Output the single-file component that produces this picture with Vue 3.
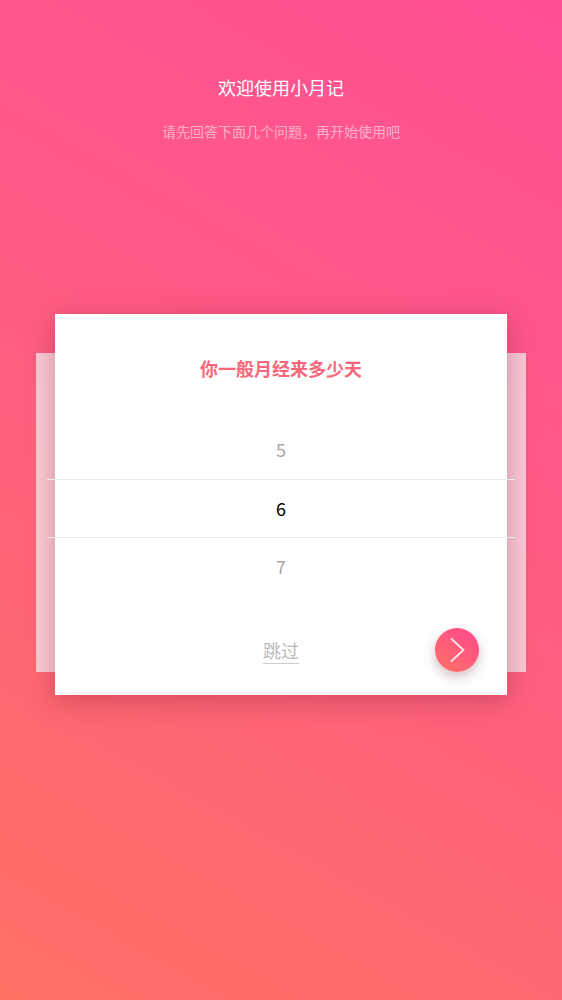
<script setup>
const items = [
  { value: 5, active: false },
  { value: 6, active: true },
  { value: 7, active: false },
]
</script>

<template>
  <main class="page">
    <header class="intro">
      <h1 class="welcome">欢迎使用小月记</h1>
      <p class="hint">请先回答下面几个问题，再开始使用吧</p>
    </header>

    <section class="stage">
      <div class="back-card"></div>
      <div class="card">
        <h2 class="question">你一般月经来多少天</h2>
        <div class="picker">
          <div v-for="item in items" :key="item.value" class="option" :class="{ active: item.active }">
            {{ item.value }}
          </div>
        </div>
        <div class="actions">
          <span class="skip">跳过</span>
          <button class="next" type="button" aria-label="下一步">
            <svg width="44" height="44" viewBox="0 0 44 44" fill="none">
              <path d="M16 10.5 L28.5 22 L16 33.5" stroke="#ffe6e9" stroke-width="1.8" />
            </svg>
          </button>
        </div>
      </div>
    </section>
  </main>
</template>

<style scoped>
.page {
  height: 1000px;
  box-sizing: border-box;
  overflow: hidden;
  padding-top: 74px;
  background: linear-gradient(209deg, #ff4f94 0%, #ff5b86 40%, #ff7163 100%);
  font-family: "Noto Sans CJK SC", "Noto Sans", sans-serif;
}
.intro {
  text-align: center;
  height: 240px;
}
.welcome {
  margin: 0;
  font-size: 18px;
  line-height: 26px;
  font-weight: 400;
  color: #fff;
}
.hint {
  margin: 21px 0 0;
  font-size: 14px;
  line-height: 20px;
  font-weight: 400;
  color: rgba(255, 255, 255, 0.55);
}
.stage {
  position: relative;
  margin: 0 55px;
}
.back-card {
  position: absolute;
  left: -19px;
  right: -19px;
  top: 39px;
  height: 319px;
  background: rgba(250, 245, 247, 0.72);
}
.card {
  position: relative;
  height: 381px;
  box-sizing: border-box;
  padding-top: 41px;
  background: #fff;
  box-shadow: 0 5px 26px rgba(110, 30, 50, 0.36);
}
.question {
  margin: 0;
  text-align: center;
  font-size: 18px;
  line-height: 26px;
  font-weight: 600;
  color: #f9677a;
}
.picker {
  margin: 40px -8px 0;
  display: flex;
  flex-direction: column;
}
.option {
  height: 58px;
  box-sizing: border-box;
  padding-bottom: 2px;
  display: flex;
  align-items: center;
  justify-content: center;
  font-size: 18px;
  color: #a8a8a8;
}
.option.active {
  height: 59px;
  color: #000;
  border-top: 1px solid #eaeaea;
  border-bottom: 1px solid #eaeaea;
}
.actions {
  position: relative;
  margin-top: 42px;
  display: flex;
  justify-content: center;
}
.skip {
  font-size: 18px;
  line-height: 25px;
  font-weight: 400;
  color: #bababa;
  border-bottom: 1px solid #cccccc;
}
.next {
  position: absolute;
  right: 28px;
  top: -10px;
  width: 44px;
  height: 44px;
  padding: 0;
  border: 0;
  border-radius: 50%;
  background: linear-gradient(215deg, #ff4a8c 5%, #ff7068 95%);
  box-shadow: 0 5px 12px rgba(90, 30, 40, 0.28);
  display: flex;
}
</style>
